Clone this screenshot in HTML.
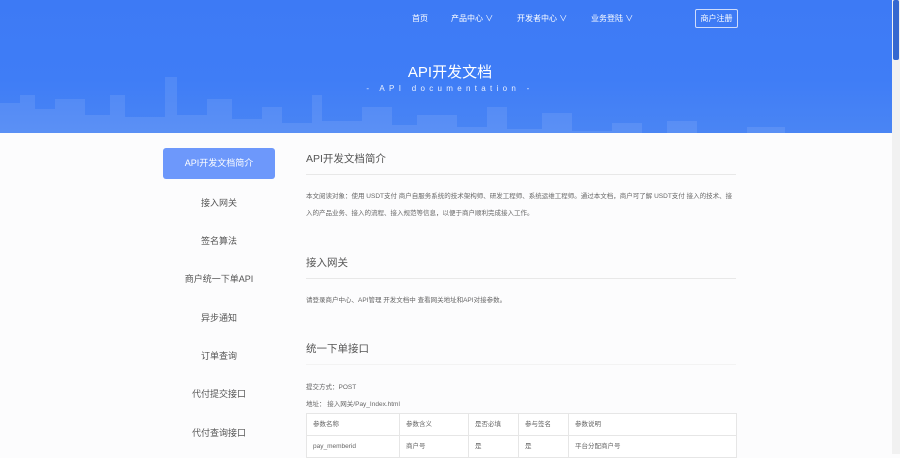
<!DOCTYPE html>
<html><head><meta charset="utf-8"><style>
*{margin:0;padding:0;box-sizing:border-box}
body{width:900px;height:454px;overflow:hidden;background:#fcfcfd;font-family:"Liberation Sans","Noto Sans CJK SC",sans-serif;position:relative;color:#555}
.hd{position:absolute;left:0;top:0;width:900px;height:133px;background:linear-gradient(180deg,#3d7af5 0%,#3f7df6 60%,#4a85f4 100%);overflow:hidden}
.city{position:absolute;left:0;bottom:0;width:900px;height:60px;opacity:.09}
.nav{position:absolute;top:13px;color:#fff;font-size:8px}
.btn{position:absolute;left:695px;top:9px;width:43px;height:19px;border:1px solid #cfdcfb;border-radius:2px;color:#fff;font-size:8px;text-align:center;line-height:17px}
.t1{position:absolute;left:0;width:900px;top:61px;text-align:center;color:#fff;font-size:15px}
.t2{position:absolute;left:0;width:900px;top:84px;text-align:center;color:#e8efff;font-size:8px;letter-spacing:4.3px}
.sb{position:absolute;right:0;top:0;width:8px;height:454px;background:#f1f1f1}
.sbt{position:absolute;right:1px;top:0;width:6px;height:60px;background:#3568d0;border-radius:2px}
.act{position:absolute;left:163px;top:148px;width:112px;height:31px;background:#6d98fb;border-radius:3px;color:#fff;font-size:9px;text-align:center;line-height:31px}
.mi{position:absolute;left:163px;width:112px;text-align:center;font-size:9px;color:#555}
.h{position:absolute;left:306px;font-size:10.5px;color:#555}
.ln{position:absolute;left:306px;width:430px;height:1px;background:#e8e8e8}
.p{position:absolute;left:306px;font-size:6.5px;color:#666;width:430px;line-height:17px}
table{position:absolute;left:306px;top:413px;width:431px;border-collapse:collapse;font-size:6.5px;color:#666}
td{border:1px solid #e6e6e6;height:22px;padding:0 0 0 6px;background:#fff;vertical-align:middle;line-height:10px}
</style></head><body>
<div class="hd">
<svg class="city" viewBox="0 0 900 60" preserveAspectRatio="none"><path fill="#ffffff" d="M0 30h20v-8h15v14h20v-10h30v16h25v-20h15v22h40v-40h12v38h30v-16h25v20h30v-12h20v16h30v-28h10v26h40v-14h30v18h25v-10h40v12h30v-20h20v22h35v-16h30v18h40v-8h30v12h25v-14h30v16h50v-10h38V60H0z"/></svg>
<div class="nav" style="left:412px">首页</div>
<div class="nav" style="left:451px">产品中心 ∨</div>
<div class="nav" style="left:517px">开发者中心 ∨</div>
<div class="nav" style="left:591px">业务登陆 ∨</div>
<div class="btn">商户注册</div>
<div class="t1">API开发文档</div>
<div class="t2">- API documentation -</div>
</div>
<div class="sb"><div class="sbt"></div></div>
<div class="act">API开发文档简介</div>
<div class="mi" style="top:196px">接入网关</div>
<div class="mi" style="top:234px">签名算法</div>
<div class="mi" style="top:272px">商户统一下单API</div>
<div class="mi" style="top:311px">异步通知</div>
<div class="mi" style="top:349px">订单查询</div>
<div class="mi" style="top:387px">代付提交接口</div>
<div class="mi" style="top:426px">代付查询接口</div>
<div class="h" style="top:151px">API开发文档简介</div>
<div class="ln" style="top:174px"></div>
<div class="p" style="top:188px">本文阅读对象：使用 USDT支付 商户自服务系统的技术架构师、研发工程师、系统运维工程师。通过本文档，商户可了解 USDT支付 接入的技术、接入的产品业务、接入的流程、接入规范等信息，以便于商户顺利完成接入工作。</div>
<div class="h" style="top:255px">接入网关</div>
<div class="ln" style="top:278px"></div>
<div class="p" style="top:292px">请登录商户中心、API管理 开发文档中 查看网关地址和API对接参数。</div>
<div class="h" style="top:341px">统一下单接口</div>
<div class="ln" style="top:364px;background:#f3f3f3"></div>
<div class="p" style="top:379px">提交方式：POST</div>
<div class="p" style="top:396px">地址： 接入网关/Pay_Index.html</div>
<table><tr><td style="width:93px">参数名称</td><td style="width:69px">参数含义</td><td style="width:50px">是否必填</td><td style="width:50px">参与签名</td><td>参数说明</td></tr>
<tr><td>pay_memberid</td><td>商户号</td><td>是</td><td>是</td><td>平台分配商户号</td></tr></table>
</body></html>
